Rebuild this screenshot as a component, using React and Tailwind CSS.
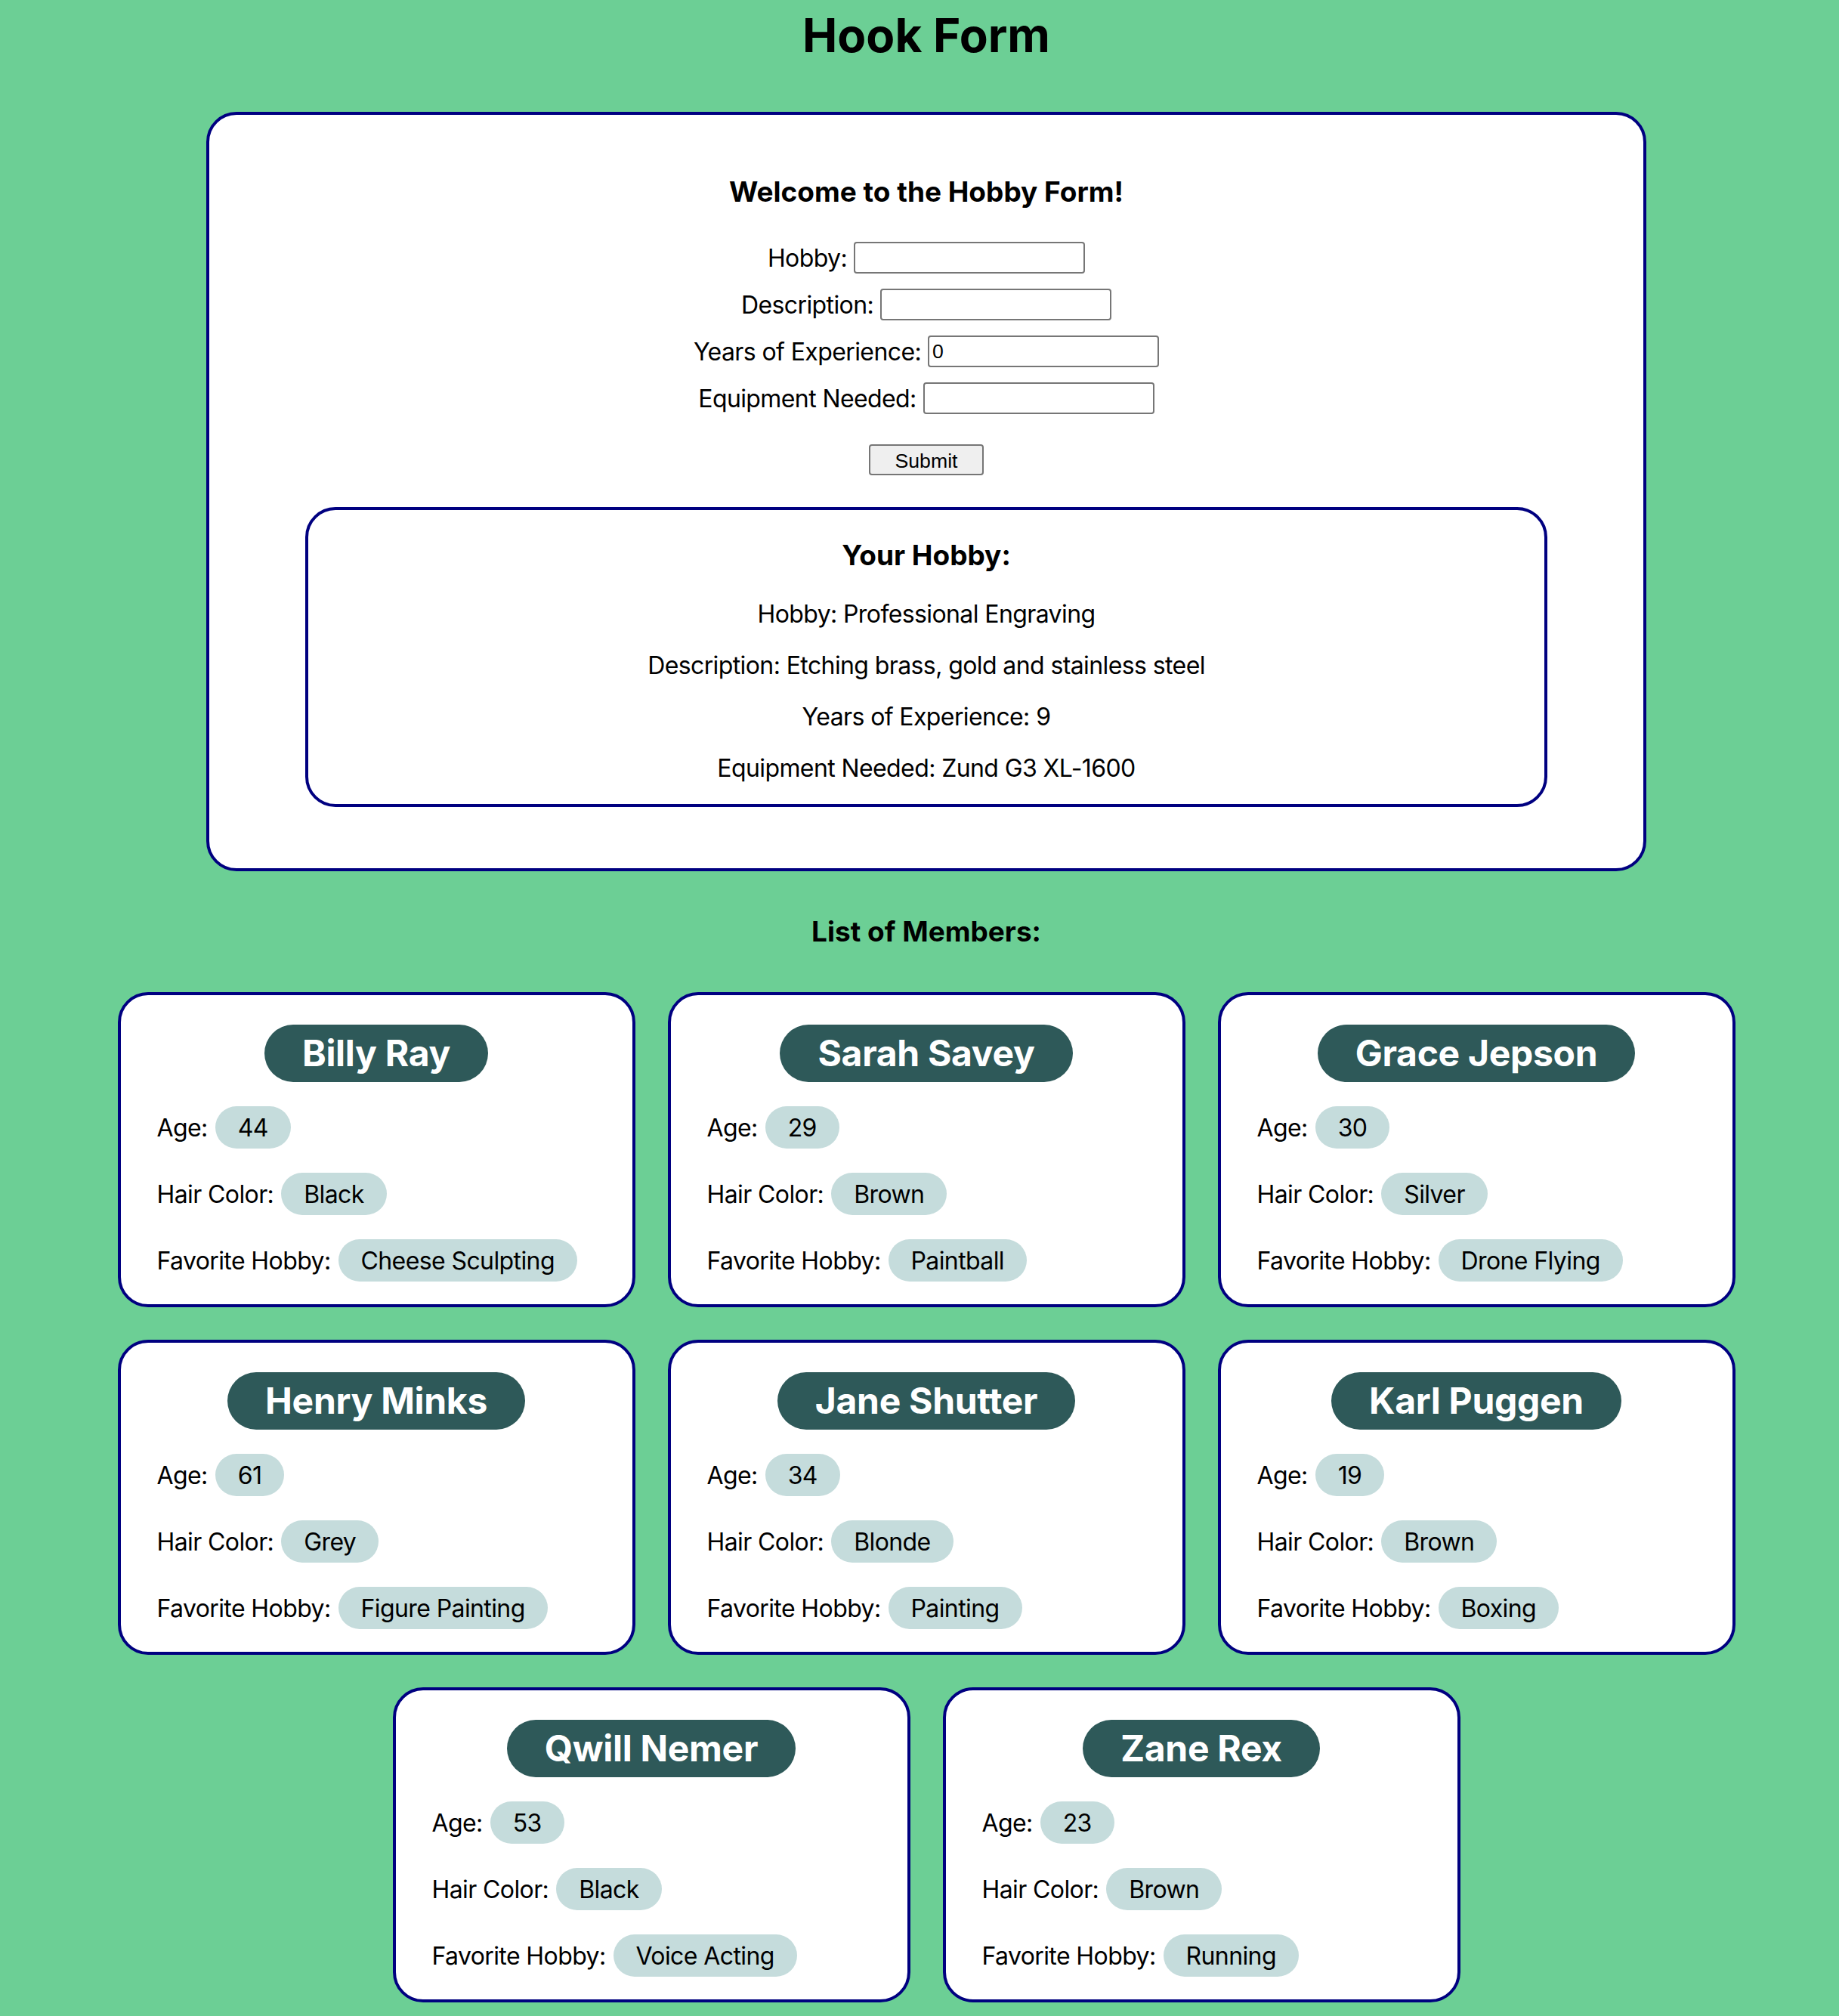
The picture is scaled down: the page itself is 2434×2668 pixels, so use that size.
import React from "react";

const members = [
  { name: "Billy Ray", age: 44, hair: "Black", hobby: "Cheese Sculpting" },
  { name: "Sarah Savey", age: 29, hair: "Brown", hobby: "Paintball" },
  { name: "Grace Jepson", age: 30, hair: "Silver", hobby: "Drone Flying" },
  { name: "Henry Minks", age: 61, hair: "Grey", hobby: "Figure Painting" },
  { name: "Jane Shutter", age: 34, hair: "Blonde", hobby: "Painting" },
  { name: "Karl Puggen", age: 19, hair: "Brown", hobby: "Boxing" },
  { name: "Qwill Nemer", age: 53, hair: "Black", hobby: "Voice Acting" },
  { name: "Zane Rex", age: 23, hair: "Brown", hobby: "Running" },
];

const fields = [
  { label: "Hobby:", value: "" },
  { label: "Description:", value: "" },
  { label: "Years of Experience:", value: "0" },
  { label: "Equipment Needed:", value: "" },
];

const details = [
  "Hobby: Professional Engraving",
  "Description: Etching brass, gold and stainless steel",
  "Years of Experience: 9",
  "Equipment Needed: Zund G3 XL-1600",
];

function Field({ label, value }) {
  return (
    <div className="flex items-center justify-center gap-[9px] h-[42px]">
      <label className="text-[32px] leading-[39px] tracking-[-0.6px]">{label}</label>
      <input
        type="text"
        defaultValue={value}
        className="w-[306px] h-[42px] border-2 border-[#767676] rounded-[4px] bg-white px-[4px] text-[26.67px] font-['Liberation_Sans',Arial,sans-serif] text-black outline-none"
      />
    </div>
  );
}

function Tag({ children }) {
  return (
    <span className="inline-flex items-center h-[56px] px-[30px] rounded-full bg-[#c5dcdc] text-[32px] leading-[39px] tracking-[-0.6px]">
      {children}
    </span>
  );
}

function Row({ label, value }) {
  return (
    <div className="flex items-center gap-[10px]">
      <span className="text-[32px] leading-[39px] tracking-[-0.6px]">{label}</span>
      <Tag>{value}</Tag>
    </div>
  );
}

function MemberCard({ m }) {
  return (
    <div className="w-[685px] h-[417px] bg-white border-4 border-[#000080] rounded-[40px] pt-[39px] pb-[30px] px-[48px] flex flex-col gap-[32px]">
      <div className="flex justify-center">
        <h2 className="bg-[#2e5959] text-white font-bold text-[48px] leading-[58px] tracking-[-0.3px] py-[9px] px-[50px] rounded-full">
          {m.name}
        </h2>
      </div>
      <Row label="Age:" value={m.age} />
      <Row label="Hair Color:" value={m.hair} />
      <Row label="Favorite Hobby:" value={m.hobby} />
    </div>
  );
}

export default function App() {
  return (
    <div className="min-h-[2668px] bg-[#6ccf95] text-black font-['Inter',sans-serif] pl-[18px]">
      <div className="flex flex-col items-center">
        <h1 className="pt-[16px] text-[62px] leading-[62px] font-bold">Hook Form</h1>

        <div className="mt-[70px] w-[1906px] bg-white border-4 border-[#000080] rounded-[40px] pt-[79px] pb-[81px] flex flex-col items-center">
          <h3 className="text-[37px] leading-[45px] font-bold">Welcome to the Hobby Form!</h3>
          <form className="mt-[44px] flex flex-col items-center" onSubmit={(e) => e.preventDefault()}>
            <div className="flex flex-col gap-[20px]">
              {fields.map((f) => (
                <Field key={f.label} {...f} />
              ))}
            </div>
            <button
              type="submit"
              className="mt-[40px] w-[152px] h-[41px] bg-[#efefef] border-2 border-[#767676] rounded-[4px] text-[26.67px] font-['Liberation_Sans',Arial,sans-serif] text-black"
            >
              Submit
            </button>
          </form>

          <div className="mt-[42px] w-[1644px] border-4 border-[#000080] rounded-[40px] pt-[37px] pb-[28px] flex flex-col items-center">
            <h3 className="text-[37px] leading-[45px] font-bold">Your Hobby:</h3>
            <div className="mt-[37px] flex flex-col items-center gap-[30px]">
              {details.map((d) => (
                <p key={d} className="text-[32px] leading-[38px] tracking-[-0.6px]">{d}</p>
              ))}
            </div>
          </div>
        </div>

        <h3 className="mt-[57px] text-[37px] leading-[45px] font-bold">List of Members:</h3>

        <div className="mt-[58px] mb-[18px] w-[2141px] flex flex-wrap justify-center gap-[43px]">
          {members.map((m) => (
            <MemberCard key={m.name} m={m} />
          ))}
        </div>
      </div>
    </div>
  );
}
